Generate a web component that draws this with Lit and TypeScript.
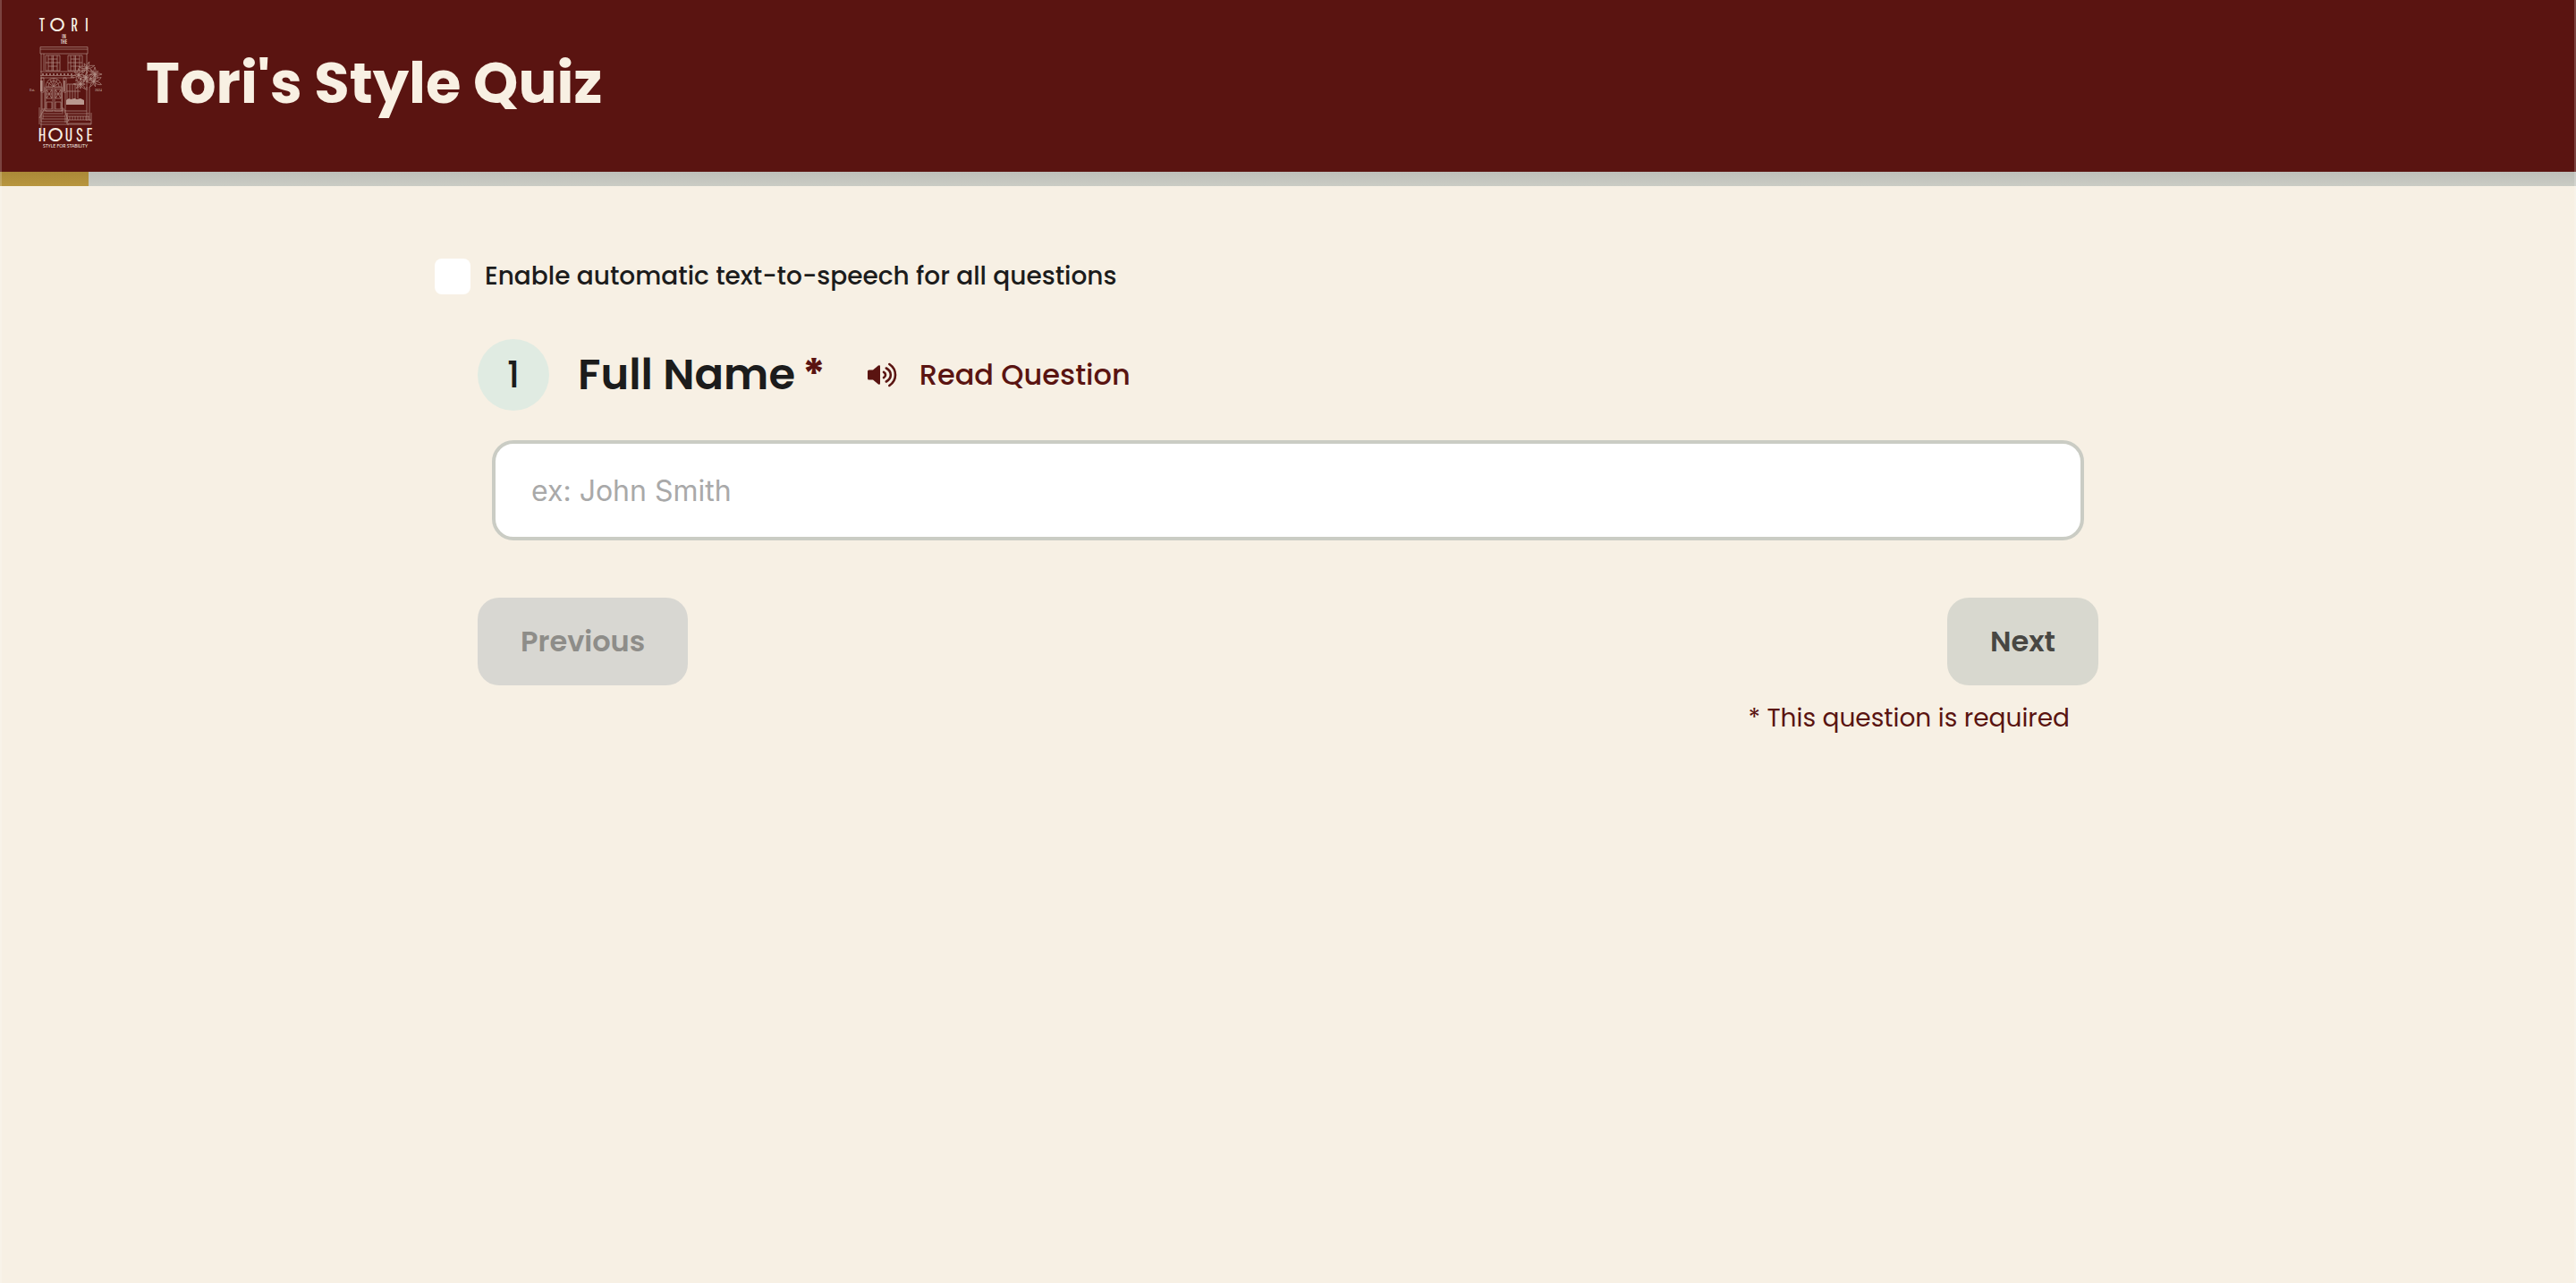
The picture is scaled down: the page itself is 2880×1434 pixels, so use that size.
import { LitElement, html, css, svg } from "lit";
import { customElement, property, state } from "lit/decorators.js";

const tuft = (x: number, y: number, r: number, n: number, t: number) =>
  Array.from({ length: n }, (_, i) => {
    const a = t + (i * Math.PI * 2) / n;
    const len = r * (i % 3 === 0 ? 1.15 : i % 3 === 1 ? 0.75 : 0.95);
    const dx = Math.cos(a) * len;
    const dy = Math.sin(a) * len;
    return svg`<path d="M${x} ${y}q${dx * 0.5 - dy * 0.3} ${dy * 0.5 + dx * 0.3} ${dx} ${dy}q${-dx * 0.5 + dy * 0.3} ${-dy * 0.5 - dx * 0.3} ${-dx} ${-dy}"/>`;
  });

@customElement("house-logo")
class HouseLogo extends LitElement {
  static styles = css`
    :host { display: block; width: 100px; height: 160px; }
    svg { display: block; width: 100%; height: 100%; }
    text {
      font-family: "Pathway Gothic One", Antonio, Oswald, "Roboto Condensed", "Liberation Sans Narrow", sans-serif;
      fill: #f8f0e3;
      text-anchor: middle;
    }
    .word { font-size: 21px; }
    .round { font-family: "Josefin Sans", Lato, sans-serif; }
    .the { font-size: 7px; }
    .tag { font-family: Lato, sans-serif; font-size: 5px; }
    .est { font-family: "Liberation Serif", serif; font-size: 4px; opacity: 0.7; }
  `;
  render() {
    return html`<svg viewBox="24 13 100 160" role="img" aria-label="Tori in the House">
      <text class="word" x="47" y="35">T</text>
      <text class="word round" x="64" y="35">O</text>
      <text class="word" x="83" y="35">R</text>
      <text class="word" x="97" y="35">I</text>
      <text class="the" x="71.5" y="43">IN</text>
      <text class="the" x="71.5" y="49">THE</text>
      <g fill="none" stroke="#f8f0e3" stroke-width="0.7" opacity="0.55">
        <path d="M45 52.500h53v7.500h-53zM45 55h53M46 60v92M97 60v41M49 60v19M45 80h42M45 84.500h40M45 87h38" />
        <path d="M51 62h16v17h-16zM54 62v17M58 62v17M59.500 62v17M64 62v17M51 70h16M54 66h10M54 74h10M76 62h16v17h-16zM79 62v17M83 62v17M84.500 62v17M89 62v17M76 70h16M79 66h10M79 74h10" />
        <path d="M47 83h36" stroke-width="1.600" stroke-dasharray="2 2" />
        <path d="M46 87h3v16h-3zM71 87h3v16h-3zM50 97v27M69.500 97v27M73 103v21M47 103v20" />
        <path d="M51 97a8.500 9 0 0 1 18 0zM54 97a5.500 6 0 0 1 12 0M60 88v9M53 92l7 5 7-5M56 89l4 8 4-8" />
        <path d="M51 98h8v26h-8zM61 98h8v26h-8zM52 100h6v10h-6zM62 100h6v10h-6zM52 114h6v8h-6zM62 114h6v8h-6zM52 100l6 10M58 100l-6 10M62 100l6 10M68 100l-6 10M52 105h6M62 105h6" />
        <path d="M75 94h12v16M75 94v18M78 94v16M81 94v17M84 94v17M75 102h15M97 97v38M100 97v38M73 124h24" />
        <path d="M49 124h22M49 127h22M48 130h25M47 133h28M46 136h30M45 139h32M44 120v19M50 121l-6 11M46 123v13M48 121v12M71 121l6 15M73 123v14M75 126v12M70 120v6" />
        <path d="M76 127h24M76 130h24M76 134h26M76 138h26M75 126v13h27v-13M78 130v4M81 130v4M84 130v4M87 130v4M90 130v4M93 130v4M96 130v4M99 130v4" />
        ${tuft(88, 84, 8, 7, 0.2)}${tuft(97, 76, 8, 7, 0.6)}${tuft(106, 83, 7, 8, 0)}${tuft(105, 91, 8, 7, 0.4)}${tuft(90, 94, 7, 8, 0.8)}${tuft(96, 87, 6, 7, 0.3)}
      </g>
      <g fill="#f8f0e3" opacity="0.6">
        <path d="M74 112l3-2 3 1 3-1 3 1 4-1 4 2v5h-20z" />
        <path d="M45 90h3v12h-3zM71 90h2v12h-2z" opacity="0.6" />
      </g>
      <text class="est" x="36" y="102">Est.</text>
      <text class="est" x="110" y="102">2024</text>
      <text class="word" x="47" y="158">H</text>
      <text class="word round" x="62" y="158">O</text>
      <text class="word" x="77" y="158">U</text>
      <text class="word" x="89" y="158">S</text>
      <text class="word" x="100" y="158">E</text>
      <text class="tag" x="73" y="165">STYLE FOR STABILITY</text>
    </svg>`;
  }
}

@customElement("app-root")
class AppRoot extends LitElement {
  @property({ type: Number }) progress = 3.44;
  @state() private name = "";

  static styles = css`
    :host {
      display: block;
      min-height: 100vh;
      background: #f7f0e4;
      color: #1c1c1c;
      font-family: Poppins, Inter, "Open Sans", sans-serif;
    }
    :host::after {
      content: "";
      position: fixed;
      inset: 0;
      border: solid rgba(255, 255, 255, 0.2);
      border-width: 0 2px;
      pointer-events: none;
    }
    * { box-sizing: border-box; }
    button, input { font: inherit; color: inherit; margin: 0; }
    .header {
      display: flex;
      align-items: center;
      gap: 39px;
      height: 192px;
      padding: 0 24px 6px;
      background: #5a1411;
    }
    .title { margin: 0; font-size: 64px; line-height: 80px; font-weight: 700; color: #f8f0e3; }
    .track { height: 16px; background: linear-gradient(#bebfba, #caccc4); }
    .fill { height: 100%; background: linear-gradient(#aa8838, #b8963e); }
    .main { max-width: 1908px; margin: 0 auto; padding: 81px 0; }
    .speech { display: flex; align-items: center; gap: 16px; font-size: 28px; line-height: 40px; font-weight: 500; }
    .check { appearance: none; width: 40px; height: 40px; background: #fff; border-radius: 8px; }
    .check:checked { background: #5a1411; }
    .question { padding: 50px 48px 0; }
    .heading { display: flex; align-items: center; height: 80px; }
    .number {
      display: grid; place-items: center; width: 80px; height: 80px; margin-right: 32px;
      border-radius: 50%; background: #e0ebe2; font-size: 40px; font-weight: 500;
    }
    .label { font-size: 48px; line-height: 72px; font-weight: 600; }
    .star { margin-left: 8px; color: #5a1411; font-weight: 700; }
    .read {
      display: flex; align-items: center; gap: 24px; margin-left: 45px; padding: 0; border: 0;
      background: none; color: #5a1411; font-size: 32px; line-height: 48px; font-weight: 500;
    }
    .speaker { width: 36px; height: 32px; }
    .name {
      display: block; width: calc(100% - 32px); height: 112px; margin: 33px 16px 0; padding: 0 40px;
      border: 4px solid #caccc4; border-radius: 24px; background: #fff; outline: 0;
      font: 400 32px/48px Inter, sans-serif;
    }
    .name::placeholder { color: #a9a9a9; opacity: 1; }
    .nav { display: flex; justify-content: space-between; margin-top: 64px; }
    .step { height: 98px; padding: 0 48px; border: 0; border-radius: 24px; font-size: 32px; font-weight: 600; }
    .prev { background: #d8d7d2; color: #8e8d89; }
    .next { background: #d8d8cf; color: #484743; }
    .required { margin: 17px 32px 0; text-align: right; font-size: 28px; line-height: 40px; color: #5a1411; }
  `;

  render() {
    return html`
      <header class="header">
        <house-logo></house-logo>
        <h1 class="title">Tori's Style Quiz</h1>
      </header>
      <div class="track" role="progressbar" aria-label="Progress" aria-valuenow=${this.progress}>
        <div class="fill" style="width:${this.progress}%"></div>
      </div>
      <main class="main">
        <label class="speech"><input class="check" type="checkbox" />Enable automatic text-to-speech for all questions</label>
        <section class="question">
          <div class="heading">
            <span class="number">1</span>
            <label class="label" for="name">Full Name<span class="star">*</span></label>
            <button class="read" type="button">
              <svg class="speaker" viewBox="0 0 36 32" aria-hidden="true">
                <path d="M2 12Q2 10.500 3.500 10.500H8l6-5Q16 4.500 16 6.500v19q0 2-2 1L8 21.500H3.500Q2 21.500 2 20z" fill="currentColor" />
                <path d="M20 12.800q2 1.200 2 3.200t-2 3.200M22.800 8.500q5 2.800 5 7.500t-5 7.500M26.300 4Q33 8.500 33 16t-6.700 12" fill="none" stroke="currentColor" stroke-width="2.600" stroke-linecap="round" />
              </svg>
              Read Question
            </button>
          </div>
          <input class="name" id="name" type="text" placeholder="ex: John Smith" .value=${this.name}
            @input=${(e: Event) => (this.name = (e.target as HTMLInputElement).value)} />
          <div class="nav">
            <button class="step prev" type="button" disabled>Previous</button>
            <button class="step next" type="button" ?disabled=${!this.name}>Next</button>
          </div>
          <p class="required">* This question is required</p>
        </section>
      </main>
    `;
  }
}
